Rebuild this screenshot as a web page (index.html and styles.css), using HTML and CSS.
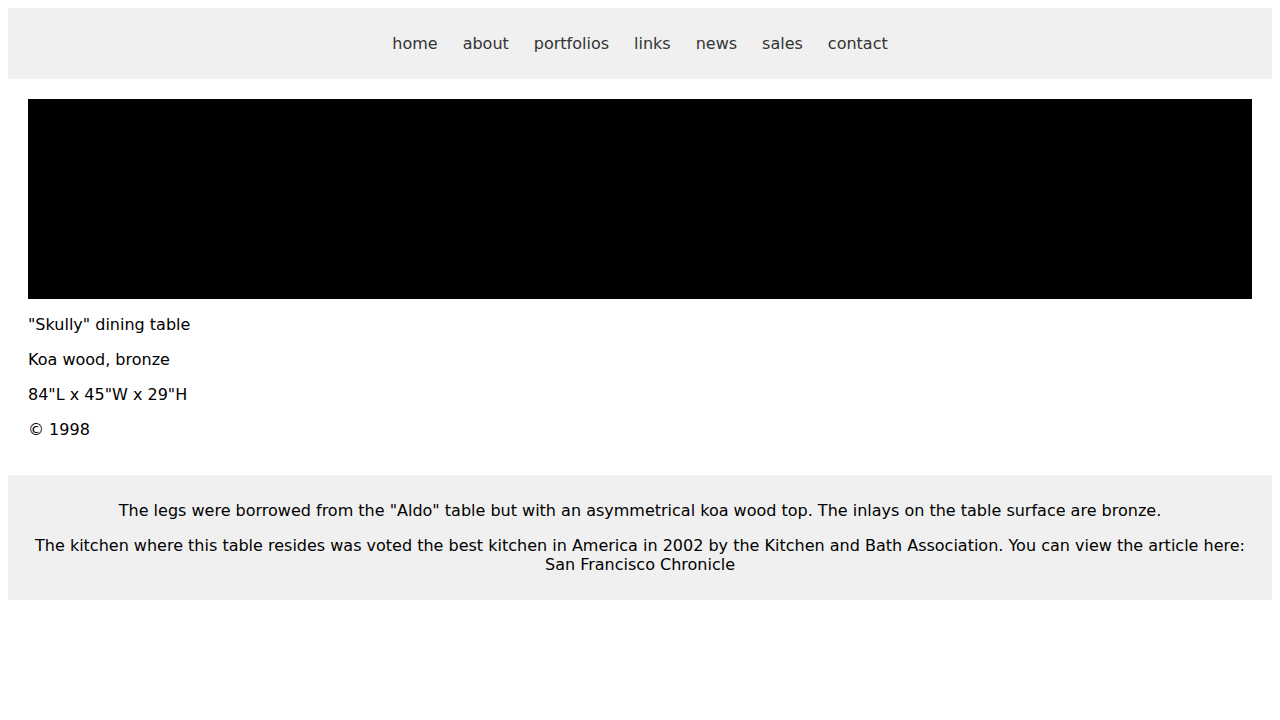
FILE: index.html
```html
<!DOCTYPE html>
<html lang="en">
<head>
<meta charset="utf-8">
<title>Skully dining table</title>
<link rel="stylesheet" href="styles.css">
</head>
<body>
<header class="site-header">
  <nav class="nav">
    <a href="#">home</a>
    <a href="#">about</a>
    <a href="#">portfolios</a>
    <a href="#">links</a>
    <a href="#">news</a>
    <a href="#">sales</a>
    <a href="#">contact</a>
  </nav>
</header>
<main class="content">
  <div class="photo"></div>
  <p>"Skully" dining table</p>
  <p>Koa wood, bronze</p>
  <p>84"L x 45"W x 29"H</p>
  <p>© 1998</p>
</main>
<footer class="notes">
  <p>The legs were borrowed from the "Aldo" table but with an asymmetrical koa wood top. The inlays on the table surface are bronze.</p>
  <p>The kitchen where this table resides was voted the best kitchen in America in 2002 by the Kitchen and Bath Association. You can view the article here: <a href="#">San Francisco Chronicle</a></p>
</footer>
</body>
</html>
```
FILE: styles.css
```css
body {
  margin: 8px;
  font-family: "DejaVu Sans", sans-serif;
  font-size: 16px;
  color: #000;
  background: #fff;
}
.site-header {
  background: #f0f0f0;
  height: 71px;
  display: flex;
  align-items: center;
  justify-content: center;
}
.nav {
  display: flex;
  gap: 25px;
}
.nav a {
  color: #333;
  text-decoration: none;
}
.content {
  padding: 20px;
}
.photo {
  height: 200px;
  background: #000;
}
.content p {
  margin: 16px 0;
}
.notes {
  background: #f0f0f0;
  padding: 10px 20px;
  text-align: center;
}
.notes p {
  margin: 16px 0;
}
.notes a {
  color: inherit;
  text-decoration: none;
}
```
